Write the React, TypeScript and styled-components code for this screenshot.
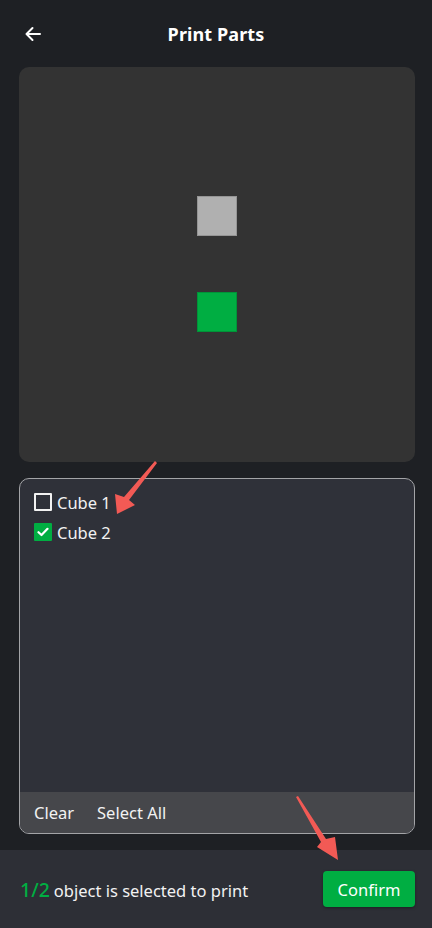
import React from "react";
import styled, { createGlobalStyle } from "styled-components";

const GlobalStyle = createGlobalStyle`
  html, body {
    margin: 0;
    padding: 0;
    background: #1e2024;
  }
  * {
    box-sizing: border-box;
  }
`;

// Whole screen
const Screen = styled.div`
  position: relative;
  width: 432px;
  height: 928px;
  display: flex;
  flex-direction: column;
  background: #1e2024;
  font-family: "Noto Sans", "Open Sans", sans-serif;
  color: #ffffff;
  overflow: hidden;
`;

// Top bar with back arrow and title
const TopBar = styled.header`
  position: relative;
  height: 67px;
  display: flex;
  align-items: center;
  justify-content: center;
  flex-shrink: 0;
`;

const BackButton = styled.button`
  position: absolute;
  left: 22px;
  top: 23px;
  width: 22px;
  height: 22px;
  padding: 0;
  border: none;
  background: none;
  display: flex;
  align-items: center;
  justify-content: center;
`;

const Title = styled.h1`
  margin: 0;
  font-size: 18px;
  font-weight: 700;
  letter-spacing: 0.1px;
`;

// 3D preview area
const Preview = styled.div`
  margin: 0 17px 0 19px;
  height: 395px;
  flex-shrink: 0;
  background: #333333;
  border-radius: 10px;
  display: flex;
  flex-direction: column;
  align-items: center;
  justify-content: center;
  gap: 56px;
  padding-bottom: 2px;
`;

const Part = styled.div<{ $color: string }>`
  width: 40px;
  height: 40px;
  background: ${(p) => p.$color};
  border: 1px solid rgba(0, 0, 0, 0.15);
`;

// Object list panel
const ListPanel = styled.div`
  margin: 16px 17px 0 19px;
  height: 356px;
  flex-shrink: 0;
  background: #2f3139;
  border: 1px solid #a3a4a7;
  border-radius: 10px;
  display: flex;
  flex-direction: column;
  overflow: hidden;
`;

const ItemList = styled.ul`
  list-style: none;
  margin: 0;
  padding: 8px 14px 0;
  flex: 1;
  display: flex;
  flex-direction: column;
`;

const Item = styled.li`
  height: 30px;
  display: flex;
  align-items: center;
  gap: 5px;
  font-size: 16.5px;
  color: #f2f2f2;
`;

const Checkbox = styled.span<{ $checked?: boolean }>`
  width: 18px;
  height: 18px;
  border-radius: 1px;
  display: flex;
  align-items: center;
  justify-content: center;
  border: ${(p) => (p.$checked ? "none" : "2px solid #f2f2f2")};
  background: ${(p) => (p.$checked ? "#00ae42" : "transparent")};
`;

const ListActions = styled.div`
  height: 41px;
  background: #46474b;
  display: flex;
  align-items: center;
  gap: 23px;
  padding: 0 14px;
  font-size: 16.5px;
  color: #f2f2f2;
`;

const ActionLink = styled.span`
  cursor: pointer;
`;

// Bottom bar
const Footer = styled.footer`
  margin-top: 16px;
  flex: 1;
  background: #2d2f36;
  display: flex;
  align-items: center;
  justify-content: space-between;
  padding: 0 17px 0 20px;
`;

const Summary = styled.div`
  font-size: 16.5px;
  color: #f2f2f2;
`;

const Count = styled.span`
  font-size: 19.5px;
  color: #00ae42;
  font-weight: 500;
  margin-right: 4px;
`;

const ConfirmButton = styled.button`
  width: 92px;
  height: 36px;
  border: none;
  border-radius: 4px;
  background: #00ae42;
  color: #ffffff;
  font-family: inherit;
  font-size: 16.5px;
  box-shadow: 0 1px 3px rgba(0, 0, 0, 0.35);
`;

// Annotation arrows drawn over the screenshot
const Annotations = styled.svg`
  position: absolute;
  left: 0;
  top: 0;
  width: 432px;
  height: 928px;
  pointer-events: none;
`;

const CheckIcon = () => (
  <svg width="12" height="10" viewBox="0 0 12 10">
    <path d="M1.5 5.2 L4.5 8 L10.5 1.8" fill="none" stroke="#fff" strokeWidth="2.2" strokeLinecap="round" strokeLinejoin="round" />
  </svg>
);

const App: React.FC = () => {
  return (
    <Screen>
      <GlobalStyle />
      <TopBar>
        <BackButton aria-label="back">
          <svg width="18" height="16" viewBox="0 0 18 16">
            <path d="M16 8 H2.5 M8.5 2 L2.5 8 L8.5 14" fill="none" stroke="#fff" strokeWidth="2" strokeLinecap="round" strokeLinejoin="round" />
          </svg>
        </BackButton>
        <Title>Print Parts</Title>
      </TopBar>

      <Preview>
        <Part $color="#b0b0b0" />
        <Part $color="#00ae42" />
      </Preview>

      <ListPanel>
        <ItemList>
          <Item>
            <Checkbox />
            Cube 1
          </Item>
          <Item>
            <Checkbox $checked>
              <CheckIcon />
            </Checkbox>
            Cube 2
          </Item>
        </ItemList>
        <ListActions>
          <ActionLink>Clear</ActionLink>
          <ActionLink>Select All</ActionLink>
        </ListActions>
      </ListPanel>

      <Footer>
        <Summary>
          <Count>1/2</Count>object is selected to print
        </Summary>
        <ConfirmButton>Confirm</ConfirmButton>
      </Footer>

      <Annotations viewBox="0 0 432 928">
        <polygon points="155,461 157,463 129,500 135,505 117,514 115,494 124,497" fill="#f25a55" />
        <polygon points="296,797 298,796 326,839 335,837 338,860 317,847 321,842" fill="#f25a55" />
      </Annotations>
    </Screen>
  );
};

export default App;
